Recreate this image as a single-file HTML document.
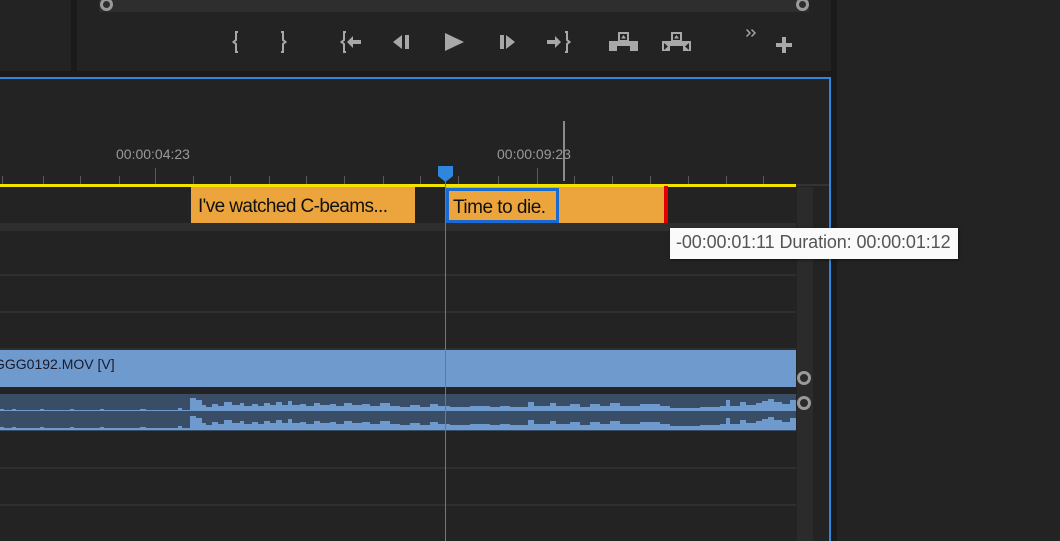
<!DOCTYPE html>
<html><head><style>
body{margin:0;width:1060px;height:541px;overflow:hidden;background:#1a1a1a;font-family:"Liberation Sans",sans-serif;position:relative}
div{position:absolute;box-sizing:border-box}
.tk{width:1px;background:#5a5a5a;top:176px;height:8px}
</style></head><body>
<div style="left:0;top:0;width:71px;height:71px;background:#232323"></div>
<div style="left:77px;top:0;width:754px;height:71px;background:#232323"></div>
<div style="left:99px;top:0;width:710px;height:12px;background:#2e2e2e"></div>
<div style="left:100px;top:-2px;width:13px;height:13px;border:3px solid #9a9a9a;border-radius:50%"></div>
<div style="left:796px;top:-2px;width:13px;height:13px;border:3px solid #9a9a9a;border-radius:50%"></div>
<svg style="position:absolute;left:0;top:0" width="831" height="71" fill="#a8a8a8">
<g fill="none" stroke="#a8a8a8" stroke-width="2">
<path d="M238 32 H236 V40 L233.5 42 L236 44 V52 H238"/>
<path d="M281 32 H283 V40 L285.5 42 L283 44 V52 H281"/>
<path d="M346 32 H344 V40 L341.5 42 L344 44 V52 H346"/>
<path d="M565 32 H567 V40 L569.5 42 L567 44 V52 H565"/>
</g>
<path d="M347 42 L353 36 V40 H361 V44 H353 V48 Z"/>
<path d="M393 42 L402 35 L402 49 Z M405 35 H409 V49 H405 Z"/>
<path d="M445 33 L464 42 L445 51 Z"/>
<path d="M500 35 H504 V49 H500 Z M506 35 L515 42 L506 49 Z"/>
<path d="M547 40 H555 V36 L561 42 L555 48 V44 H547 Z"/>
<path d="M609 41 H638 V51 H630 V46 H617 V51 H609 Z M618 32 H629 V42 H618 Z" />
<path d="M620 34 H627 V40 H620 Z" fill="#232323"/>
<path d="M623.5 35 L626 38.5 H621 Z"/>
<path d="M662 41 H691 V51 H683 V46 H670 V51 H662 Z M671 32 H682 V42 H671 Z"/>
<path d="M673 34 H680 V40 H673 Z M664 43 L668 46.5 L664 50 Z M689 43 L685 46.5 L689 50 Z" fill="#232323"/>
<path d="M676.5 35 L679 38.5 H674 Z"/>
<path d="M747 29 L751 33 L747 37 L746 36 L749 33 L746 30 Z M752 29 L756 33 L752 37 L751 36 L754 33 L751 30 Z"/>
<path d="M782 37 H786 V43 H792 V47 H786 V53 H782 V47 H776 V43 H782 Z"/>
</svg>
<div style="left:837px;top:0;width:223px;height:541px;background:#232323"></div>
<div style="left:0;top:77px;width:831px;height:464px;background:#232323;border-top:2px solid #2f86de;border-right:2px solid #2f86de"></div>
<div style="left:116px;top:146px;color:#9a9a9a;font-size:14px">00:00:04:23</div>
<div style="left:497px;top:146px;color:#9a9a9a;font-size:14px">00:00:09:23</div>
<div class="tk" style="left:2px"></div><div class="tk" style="left:43px"></div><div class="tk" style="left:80px"></div><div class="tk" style="left:119px"></div><div class="tk" style="left:155px;top:168px;height:16px"></div><div class="tk" style="left:193px"></div><div class="tk" style="left:230px"></div><div class="tk" style="left:269px"></div><div class="tk" style="left:306px"></div><div class="tk" style="left:344px"></div><div class="tk" style="left:383px"></div><div class="tk" style="left:420px"></div><div class="tk" style="left:458px"></div><div class="tk" style="left:498px"></div><div class="tk" style="left:537px;top:168px;height:16px"></div><div class="tk" style="left:574px"></div><div class="tk" style="left:612px"></div><div class="tk" style="left:650px"></div><div class="tk" style="left:688px"></div><div class="tk" style="left:726px"></div><div class="tk" style="left:763px"></div>
<div style="left:563px;top:121px;width:2px;height:60px;background:#8a8a8a"></div>
<div style="left:0;top:184px;width:796px;height:3px;background:#f3e400"></div>
<div style="left:796px;top:184px;width:33px;height:2px;background:#333"></div>
<div style="left:0;top:223px;width:796px;height:8px;background:#2e2e2e"></div>
<div style="left:797px;top:187px;width:16px;height:354px;background:#2b2b2b"></div>
<div style="left:0;top:274px;width:796px;height:2px;background:#2f2f2f"></div>
<div style="left:0;top:311px;width:796px;height:2px;background:#2f2f2f"></div>
<div style="left:0;top:348px;width:796px;height:2px;background:#2f2f2f"></div>
<div style="left:0;top:467px;width:796px;height:2px;background:#2f2f2f"></div>
<div style="left:0;top:504px;width:796px;height:2px;background:#2f2f2f"></div>
<div style="left:191px;top:187px;width:224px;height:36px;background:#eca53c;color:#111;font-size:19px;padding:9px 0 0 7px;white-space:nowrap;letter-spacing:-0.6px">I've watched C-beams...</div>
<div style="left:446px;top:187px;width:220px;height:36px;background:#eca53c"></div>
<div style="left:664px;top:186px;width:4px;height:37px;background:#e00000"></div>
<div style="left:446px;top:188px;width:113px;height:35px;border:3px solid #1a6ad4;color:#111;font-size:19px;padding:6px 0 0 4px;white-space:nowrap;letter-spacing:-0.5px">Time to die.</div>
<div style="left:0;top:350px;width:796px;height:37px;background:#6f9ace;color:#1a1a2a;font-size:14px;padding:6px 0 0 0;white-space:nowrap;overflow:hidden"><span style="margin-left:-6px">GGG0192.MOV [V]</span></div>
<div style="left:0;top:394px;width:796px;height:37px;background:#3a4d66"></div>
<svg style="position:absolute;left:0;top:394px" width="796" height="37">
<g fill="#6f9ace">
<path id="w" d="M0 18 V15 H4 V16 H12 V15 H16 V16 H40 V15 H44 V16 H70 V15 H74 V16 H100 V15 H104 V16 H140 V15 H146 V16 H178 V14 H182 V16 H190 V4 H196 V6 H202 V11 H206 V13 H212 V10 H218 V12 H224 V8 H232 V11 H240 V9 H244 V12 H252 V10 H258 V12 H264 V9 H270 V11 H276 V8 H282 V11 H288 V7 H292 V11 H300 V10 H306 V12 H314 V9 H320 V11 H330 V10 H336 V12 H344 V9 H352 V11 H362 V10 H370 V12 H380 V9 H390 V12 H400 V13 H410 V11 H420 V13 H430 V10 H438 V12 H450 V13 H470 V12 H490 V13 H500 V12 H510 V13 H528 V8 H534 V12 H550 V9 H556 V12 H570 V10 H580 V13 H590 V10 H600 V12 H610 V9 H620 V12 H640 V10 H660 V12 H670 V14 H700 V13 H720 V12 H726 V6 H730 V12 H740 V8 H746 V11 H756 V9 H762 V7 H768 V5 H774 V8 H782 V10 H790 V6 H796 V18 Z"/>
<use href="#w" y="18"/>
</g>
<rect x="0" y="17" width="796" height="2" fill="#3a4d66"/>
</svg>
<div style="left:445px;top:181px;width:1px;height:360px;background:#2f86de"></div>
<svg style="position:absolute;left:437px;top:165px" width="17" height="18"><path d="M1 1 H16 V11 L8.5 17 L1 11 Z" fill="#2f86de"/></svg>
<div style="left:797px;top:371px;width:14px;height:14px;border:3px solid #9a9a9a;border-radius:50%"></div>
<div style="left:797px;top:396px;width:14px;height:14px;border:3px solid #9a9a9a;border-radius:50%"></div>
<div style="left:670px;top:228px;width:288px;height:31px;background:#fafafa;box-shadow:1px 1px 3px rgba(0,0,0,.5);color:#555;font-size:18px;padding:4px 0 0 6px;white-space:nowrap;letter-spacing:-0.1px">-00:00:01:11 Duration: 00:00:01:12</div>
</body></html>
